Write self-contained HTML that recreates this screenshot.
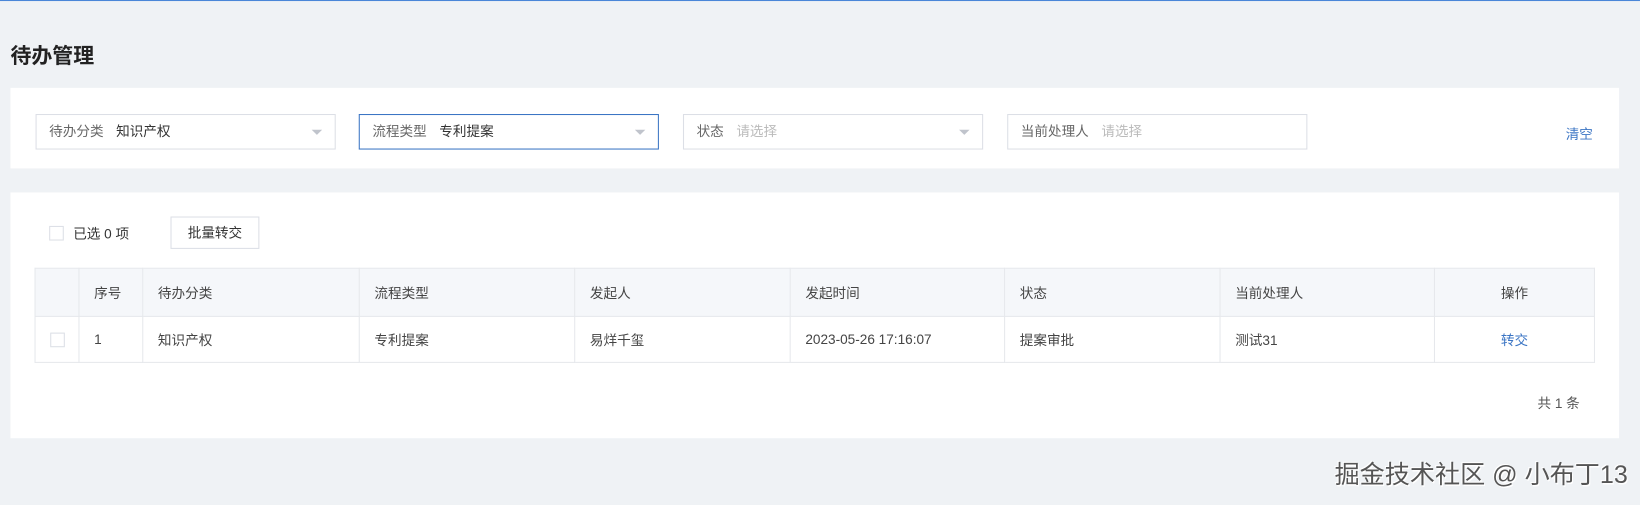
<!DOCTYPE html>
<html><head><meta charset="utf-8"><style>
*{box-sizing:border-box;margin:0;padding:0}
body{width:1640px;height:505px;background:#eff2f5;font-family:"Liberation Sans","Noto Sans CJK SC",sans-serif;overflow:hidden}
#w{position:relative;width:1568px;height:483px;transform:scale(1.0459);transform-origin:0 0;font-size:13px;color:#333;border-top:1px solid #4a86d8}
.abs{position:absolute}
h1{position:absolute;left:10px;top:36px;font-size:20px;font-weight:bold;color:#222}
.card{position:absolute;background:#fff}
.sel{position:absolute;top:108px;height:34px;width:287px;border:1px solid #dcdfe6;background:#fff;line-height:32px;padding-left:12px;color:#666}
.sel b{font-weight:normal;color:#333;margin-left:12px}
.sel i{font-style:normal;color:#bbb;margin-left:12px}
.arr{position:absolute;right:12px;top:14px;width:0;height:0;border-left:5px solid transparent;border-right:5px solid transparent;border-top:5px solid #c0c4cc}
.cb{position:absolute;width:14px;height:14px;border:1px solid #dcdfe6;background:#fff}
table{position:absolute;left:33px;top:255px;border-collapse:collapse;width:1492px}
td{border:1px solid #e6e8ec;padding-left:14px;color:#444}
tr.h td{background:#f5f7fa;height:46px}
tr.r td{height:44px}
</style></head><body><div id="w">
<h1>待办管理</h1>
<div class="card" style="left:10px;top:83px;width:1538px;height:77px"></div>
<div class="sel" style="left:34px">待办分类<b>知识产权</b><span class="arr"></span></div>
<div class="sel" style="left:343px;border-color:#3b75c4">流程类型<b>专利提案</b><span class="arr"></span></div>
<div class="sel" style="left:653px">状态<i>请选择</i><span class="arr"></span></div>
<div class="sel" style="left:963px">当前处理人<i>请选择</i></div>
<div class="abs" style="left:1497px;top:117px;color:#3b75c4">清空</div>
<div class="card" style="left:10px;top:183px;width:1538px;height:235px"></div>
<div class="cb" style="left:47px;top:215px"></div>
<div class="abs" style="left:70px;top:212px">已选 0 项</div>
<div class="abs" style="left:163px;top:206px;width:85px;height:31px;border:1px solid #dcdfe6;text-align:center;line-height:29px">批量转交</div>
<table>
<tr class="h"><td style="width:42px"></td><td style="width:61px">序号</td><td style="width:207px">待办分类</td><td style="width:206px">流程类型</td><td style="width:206px">发起人</td><td style="width:205px">发起时间</td><td style="width:206px">状态</td><td style="width:205px">当前处理人</td><td style="text-align:center;padding:0">操作</td></tr>
<tr class="r"><td><div class="cb" style="position:relative;left:0"></div></td><td>1</td><td>知识产权</td><td>专利提案</td><td>易烊千玺</td><td>2023-05-26 17:16:07</td><td>提案审批</td><td>测试31</td><td style="text-align:center;padding:0;color:#3b75c4">转交</td></tr>
</table>
<div class="abs" style="left:1470px;top:374px;color:#555">共 1 条</div>
<div class="abs" style="left:1276px;top:433px;font-size:24px;color:#555;text-shadow:1px 1px 0 #fff,-1px -1px 0 #fff">掘金技术社区 @ 小布丁13</div>
</div></body></html>
